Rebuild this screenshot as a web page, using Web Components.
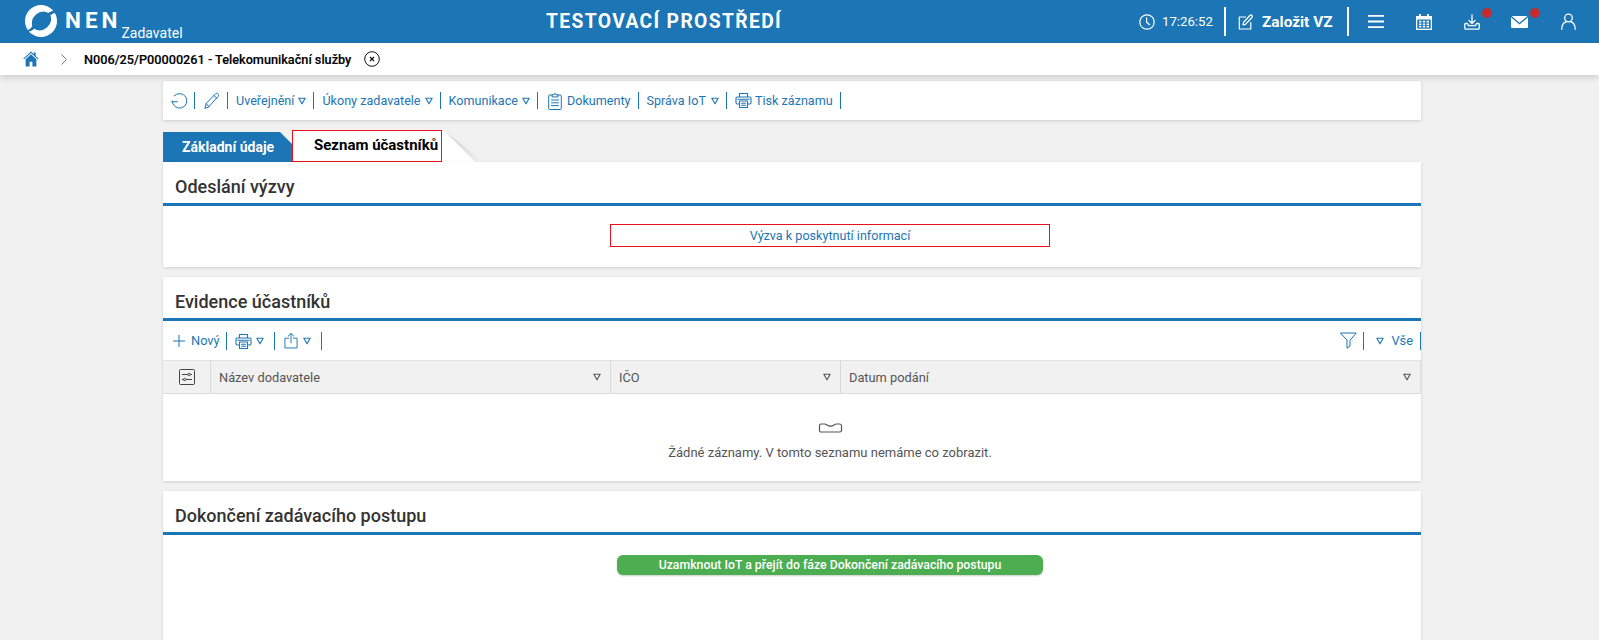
<!DOCTYPE html>
<html lang="cs"><head><meta charset="utf-8"><title>NEN</title>
<style>
html,body{margin:0;padding:0;height:640px;overflow:hidden;background:#f1f1f1;font-family:Roboto,"Liberation Sans",sans-serif;}
</style></head><body>
<nen-header></nen-header>
<nen-crumb></nen-crumb>
<nen-page>
  <nen-actions></nen-actions>
  <nen-tabs></nen-tabs>
  <nen-card heading="Odeslání výzvy" style="height:105px"><nen-invite></nen-invite></nen-card>
  <nen-card heading="Evidence účastníků" style="height:204px;margin-top:10px"><nen-grid></nen-grid></nen-card>
  <nen-card heading="Dokončení zadávacího postupu" style="height:160px;margin-top:10px"><nen-finish></nen-finish></nen-card>
</nen-page>
<script>
const S='fill="none" stroke="currentColor" stroke-linecap="round" stroke-linejoin="round"';
const ICON={
 tri:`<svg width="8" height="8" viewBox="0 0 8 8" ${S} stroke-width="1.1"><path d="M.8 1.200h6.400L4 6.800z"/></svg>`,
 printer:`<svg width="17" height="17" viewBox="0 0 17 17" ${S} stroke-width="1.1"><path d="M4.500 5V1.500h8V5M4 12H2.200A1.200 1.200 0 0 1 1 10.800V6.200A1.200 1.200 0 0 1 2.200 5h12.600A1.200 1.200 0 0 1 16 6.200v4.600a1.200 1.200 0 0 1-1.200 1.200H13"/><path d="M4.500 9h8v6.500h-8zM6.500 11.200h4M6.500 13.300h4M2.800 7.200h11.400"/></svg>`
};
function def(name,css,html){
  customElements.define(name,class extends HTMLElement{
    constructor(){super();this.attachShadow({mode:'open'}).innerHTML=`<style>${css}</style>`+(typeof html==='function'?html(this):html);}
  });
}
def('nen-header',`
:host{display:flex;align-items:center;height:43px;background:#1c75b4;color:#fff;font-family:Roboto,sans-serif;position:relative}
.logo{display:flex;align-items:flex-start;margin-left:25px;width:345px;height:43px;flex:none}
.logo svg{margin-top:5px;flex:none}
.nen{font-size:22.500px;font-weight:700;letter-spacing:4px;margin:4px 0 0 8px;line-height:32px}
.zad{font-size:14px;line-height:16px;margin:25px 0 0 0;width:60px}
.title{width:500px;flex:none;text-align:center;font-size:19.300px;font-weight:700;letter-spacing:1.350px;margin-left:44px}
.right{margin-left:auto;margin-right:23px;display:flex;align-items:center;height:43px}
.time{font-size:13.200px;margin-left:7px;width:49px;flex:none;white-space:nowrap}
.sep{width:2px;height:29px;background:#fff;flex:none}
.new{font-size:15.400px;font-weight:700;margin-left:8px;width:72px;flex:none;white-space:nowrap}
.ic{position:relative;display:flex;align-items:center;justify-content:center;flex:none}
.dot{position:absolute;width:10px;height:10px;border-radius:50%;background:#c62c2c}
`,`
<div class="logo">
 <svg width="32" height="32" viewBox="0 0 32 32"><circle cx="16" cy="16" r="16" fill="#fff"/><ellipse cx="16.500" cy="16" rx="10.500" ry="8.500" transform="rotate(-40 16.500 16)" fill="#1c75b4"/><path fill="#1c75b4" d="M8 20C6.500 23 4 25 .8 25.800L2.500 27C6 26.500 9 24.500 11 22ZM24 12C26 9.500 28.500 8 31.500 7.500L30 5.500C26.500 6 23 7.500 21 10Z"/></svg>
 <span class="nen">NEN</span><span class="zad">Zadavatel</span>
</div>
<div class="title">TESTOVACÍ PROSTŘEDÍ</div>
<div class="right">
 <svg width="16" height="16" viewBox="0 0 16 16" ${S} stroke-width="1.200"><circle cx="8" cy="8" r="7.200"/><path d="M7.600 3.800v4.500l3 2.400"/></svg>
 <span class="time">17:26:52</span>
 <span class="sep" style="margin-left:13px"></span>
 <svg style="margin-left:12px;flex:none" width="16" height="16" viewBox="0 0 16 16" ${S} stroke-width="1.200"><path d="M7.500 3H1.300v12h11.500V8.500"/><path d="M5.500 8.500 11.800 1.500c.6-.6 1.400-.6 2 0s.7 1.400.1 2L7.500 10.300l-2.500.6z"/></svg>
 <span class="new">Založit VZ</span>
 <span class="sep" style="margin-left:13px"></span>
 <svg style="margin-left:19px;flex:none" width="16" height="13" viewBox="0 0 16 13"><path fill="#fff" d="M0 0h16v1.800H0zM0 5.600h16v1.800H0zM0 11.200h16V13H0z"/></svg>
 <svg style="margin-left:32px;flex:none" width="16" height="16" viewBox="0 0 16 16"><path fill="#fff" d="M3 0h2v2h6V0h2v2h3v14H0V2h3z"/><path fill="#1c75b4" d="M1.300 5.500h13.400v9.200H1.300z"/><path fill="#fff" d="M3 6.800h2.400v1.800H3zM6.800 6.800h2.400v1.800H6.800zM10.600 6.800H13v1.800h-2.400zM3 9.400h2.400v1.800H3zM6.800 9.400h2.400v1.800H6.800zM10.600 9.400H13v1.800h-2.400zM3 12h2.400v1.600H3zM6.800 12h2.400v1.600H6.800zM10.600 12H13v1.600h-2.400z"/></svg>
 <span class="ic" style="margin-left:32px">
  <svg width="16" height="16" viewBox="0 0 16 16" ${S} stroke-width="1.300"><path d="M8 1v8M5 6.500 8 9.500l3-3"/><path d="M3.500 9.500H1.500a.7.7 0 0 0-.7.7v4a.9.9 0 0 0 .9.9h12.600a.9.9 0 0 0 .9-.9v-4a.7.7 0 0 0-.7-.7h-2l-1.200 2.200h-6.600z"/></svg>
  <span class="dot" style="left:18px;top:-6px"></span></span>
 <span class="ic" style="margin-left:31px">
  <svg width="17" height="12" viewBox="0 0 17 12"><path fill="#fff" d="M.6 0h15.800L8.500 6.800z"/><path fill="#fff" d="M0 1.200 8.500 8.500 17 1.200V11a1 1 0 0 1-1 1H1a1 1 0 0 1-1-1z"/></svg>
  <span class="dot" style="left:19px;top:-8px"></span></span>
 <svg style="margin-left:33px;flex:none" width="15" height="17" viewBox="0 0 15 17" ${S} stroke-width="1.300"><circle cx="7.500" cy="5" r="3.800"/><path d="M.8 16.300c0-4 2.200-7 4.600-7.700M14.200 16.300c0-4-2.200-7-4.600-7.700"/></svg>
</div>`);
def('nen-crumb',`
:host{display:flex;align-items:center;height:32px;background:#fff;box-shadow:0 3px 6px rgba(0,0,0,.14);position:relative;font-family:Roboto,sans-serif;color:#000}
.t{font-size:12.700px;font-weight:500;margin-left:17px;width:267px;flex:none;white-space:nowrap;-webkit-text-stroke:.15px #000}
svg{flex:none}
`,`
<svg style="margin-left:23px" width="16" height="16" viewBox="0 0 17 16"><path fill="#1c75b4" d="M8.500 0 0 8h1.600L8.500 1.700 15.400 8H17L13.500 4.700V1h-2v1.800zM2.800 8.300 8.500 3l5.700 5.300V16H10V11H7v5H2.800z"/></svg>
<svg style="margin-left:22px" width="6" height="11" viewBox="0 0 6 11" fill="none" stroke="#7a7a7a" stroke-width="1"><path d="M.5.500l5 5-5 5"/></svg>
<span class="t">N006/25/P00000261 - Telekomunikační služby</span>
<svg style="margin-left:13px" width="16" height="16" viewBox="0 0 16 16" fill="none" stroke="#111" stroke-width="1"><circle cx="8" cy="8" r="7.300"/><path stroke-width="1.200" d="M6 6l4 4M10 6l-4 4"/></svg>`);
def('nen-page',`:host{display:block;width:1258px;margin:6px 0 0 163px}`,`<slot></slot>`);
def('nen-actions',`
:host{display:flex;align-items:center;height:39px;background:#fff;box-shadow:0 1px 3px rgba(0,0,0,.16);color:#1c75b4;font:12.600px Roboto,sans-serif;padding-left:8px;box-sizing:border-box}
.s{width:1px;height:17px;background:#1c75b4;margin:0 8px 0 7px;flex:none}
svg{flex:none}
.d{margin-left:4px;display:flex}
span{white-space:nowrap}
`,`
<svg width="17" height="17" viewBox="0 0 17 17" ${S} stroke-width="1"><path d="M3.200 3.800A7.300 7.300 0 1 1 1.200 9"/><path d="M0.800 9.800h5.600"/></svg><span class="s" style="margin:0 9px 0 6px"></span>
<svg width="16" height="17" viewBox="0 0 16 17" ${S} stroke-width="1"><path d="M1 16l1.200-4.500L11.500 1.800c.8-.8 1.800-.8 2.600 0s.8 1.800 0 2.600L4.800 14.800zM2.200 11.500l2.600 3.300M10 3.500l3 3"/></svg><span class="s"></span>
<span>Uveřejnění</span><span class="d">${ICON.tri}</span><span class="s"></span>
<span>Úkony zadavatele</span><span class="d">${ICON.tri}</span><span class="s"></span>
<span>Komunikace</span><span class="d">${ICON.tri}</span><span class="s" style="margin-right:10px"></span>
<svg width="14" height="18" viewBox="0 0 14 18" ${S} stroke-width="1"><path d="M4 3H1.500A1 1 0 0 0 .7 4v12.500a1 1 0 0 0 1 1h10.600a1 1 0 0 0 1-1V4a1 1 0 0 0-1-1H10"/><path d="M4 4.500V2.800h1.800a1.200 1.200 0 0 1 2.400 0H10v1.700zM3.500 8h7M3.500 10.800h7M3.500 13.600h7"/></svg>
<span style="margin-left:5px">Dokumenty</span><span class="s"></span>
<span>Správa IoT</span><span class="d" style="margin-left:5px">${ICON.tri}</span><span class="s"></span>
${ICON.printer}<span style="margin-left:3px">Tisk záznamu</span><span class="s"></span>`);
def('nen-tabs',`
:host{display:flex;align-items:flex-end;height:30px;margin-top:12px;font-family:Roboto,sans-serif;position:relative}
.a{width:129px;height:30px;background:#1c75b4;clip-path:polygon(0 0,117px 0,129px 12px,129px 100%,0 100%);color:#fff;font-weight:700;font-size:14px;display:flex;align-items:center;box-sizing:border-box;padding-left:19px;flex:none}
.b{width:150px;height:32px;background:#fff;border:1px solid #e8111b;box-sizing:border-box;color:#000;font-weight:700;font-size:15px;display:flex;align-items:center;padding:0 0 3px 21px;flex:none;white-space:nowrap}
svg{flex:none}
`,`<div class="a">Základní údaje</div><div class="b">Seznam účastníků</div><svg width="41" height="31" viewBox="0 0 41 31"><defs><linearGradient id="f" x1="0" y1="0" x2="1" y2="1"><stop offset=".35" stop-color="#d9d9d9"/><stop offset="1" stop-color="#f1f1f1"/></linearGradient></defs><path fill="url(#f)" d="M3 0 41 31H33L3 6z"/><path fill="#fff" d="M0 0H3L33 31H0z"/></svg>`);
def('nen-card',`
:host{display:block;background:#fff;box-shadow:0 1px 3px rgba(0,0,0,.14);font-family:Roboto,sans-serif;position:relative;box-sizing:border-box}
h2{margin:0;box-sizing:border-box;padding:14px 0 0 12px;font-size:18px;line-height:22px;font-weight:500;color:#333;border-bottom:3px solid #1c75b4;height:44px}
`,el=>`<h2>${el.getAttribute('heading')}</h2><slot></slot>`);
def('nen-invite',`
:host{display:flex;justify-content:center;padding:18px 0 0 76px}
a{display:block;width:440px;height:23px;box-sizing:border-box;border:1px solid #e8111b;color:#1c75b4;text-align:center;font:12.600px/21px Roboto,sans-serif}
`,`<a>Výzva k poskytnutí informací</a>`);
def('nen-grid',`
:host{display:block;font:12.800px Roboto,sans-serif;color:#1c75b4}
.bar{display:flex;align-items:center;height:39px;padding:0 0 0 10px}
.s{width:1px;height:18px;background:#1c75b4;flex:none}
.sp{flex:1}
.row{display:grid;grid-template-columns:47px 400px 230px 1fr;height:34px;background:#f1f1f1;border-top:1px solid #e2e2e2;border-bottom:1px solid #dcdcdc;box-sizing:border-box;color:#555;border-right:1px solid #ddd}
.c{display:flex;align-items:center;justify-content:space-between;padding:0 9px 0 8px;border-left:1px solid #d8d8d8}
.c:first-child{border-left:0;justify-content:center;padding:0}
.c svg{color:#555}
.empty{display:flex;flex-direction:column;align-items:center;color:#555;padding:29px 0 0 76px;font-size:13px}
.empty svg{display:block}
.empty span{margin-top:12px}
`,`
<div class="bar">
 <svg width="12" height="12" viewBox="0 0 12 12" fill="none" stroke="currentColor"><path d="M6 0v12M0 6h12"/></svg>
 <span style="margin:0 8px 0 6px;width:27px">Nový</span><span class="s"></span>
 <span style="margin:1px 4px 0 8px;display:flex">${ICON.printer}</span><span style="display:flex;margin-right:10px">${ICON.tri}</span><span class="s"></span>
 <span style="margin:-1px 5px 0 9px;display:flex"><svg width="14" height="17" viewBox="0 0 15 17" ${S} stroke-width="1"><path d="M5 6H1v10.500h13V6h-4M7.500 11V1M4.500 3.800 7.500 1l3 2.800"/></svg></span><span style="display:flex;margin-right:10px">${ICON.tri}</span><span class="s"></span>
 <span class="sp"></span>
 <svg width="17" height="17" viewBox="0 0 17 17" ${S} stroke-width="1"><path d="M.8 1h15.400L10 8.500V14l-3 2.200V8.500z"/></svg>
 <span class="s" style="margin:0 12px 0 6px"></span>
 <span style="display:flex;margin-right:7px">${ICON.tri}</span><span style="margin-right:7px">Vše</span><span class="s"></span>
</div>
<div class="row">
 <div class="c"><svg width="16" height="16" viewBox="0 0 16 16" fill="none" stroke="#444"><rect x=".5" y=".5" width="15" height="15" rx="1"/><path d="M3 5.500h6M11.500 5.500H13M3 10.500h1.500M7 10.500h6"/><circle cx="10.200" cy="5.500" r="1.200"/><circle cx="5.700" cy="10.500" r="1.200"/></svg></div>
 <div class="c">Název dodavatele ${ICON.tri}</div>
 <div class="c">IČO ${ICON.tri}</div>
 <div class="c">Datum podání ${ICON.tri}</div>
</div>
<div class="empty">
 <svg width="25" height="10" viewBox="0 0 24 10" fill="none" stroke="#555" stroke-width="1.200"><path d="M1 3c0-1 .6-2 1.600-2h3.800c1 0 3 2.200 5.600 2.200S16.600 1 17.600 1h3.800c1 0 1.600 1 1.600 2v4.500c0 1-.6 1.500-1.600 1.500H2.600C1.600 9 1 8.500 1 7.500z"/></svg>
 <span>Žádné záznamy. V tomto seznamu nemáme co zobrazit.</span>
</div>`);
def('nen-finish',`
:host{display:flex;justify-content:center;padding:20px 0 0 76px}
button{all:unset;display:block;width:426px;height:20px;background:#4cae50;color:#fff;border-radius:6px;text-align:center;font:500 12.300px/20px Roboto,sans-serif;box-shadow:0 1px 2px rgba(0,0,0,.2)}
`,`<button>Uzamknout IoT a přejít do fáze Dokončení zadávacího postupu</button>`);
</script>
</body></html>
